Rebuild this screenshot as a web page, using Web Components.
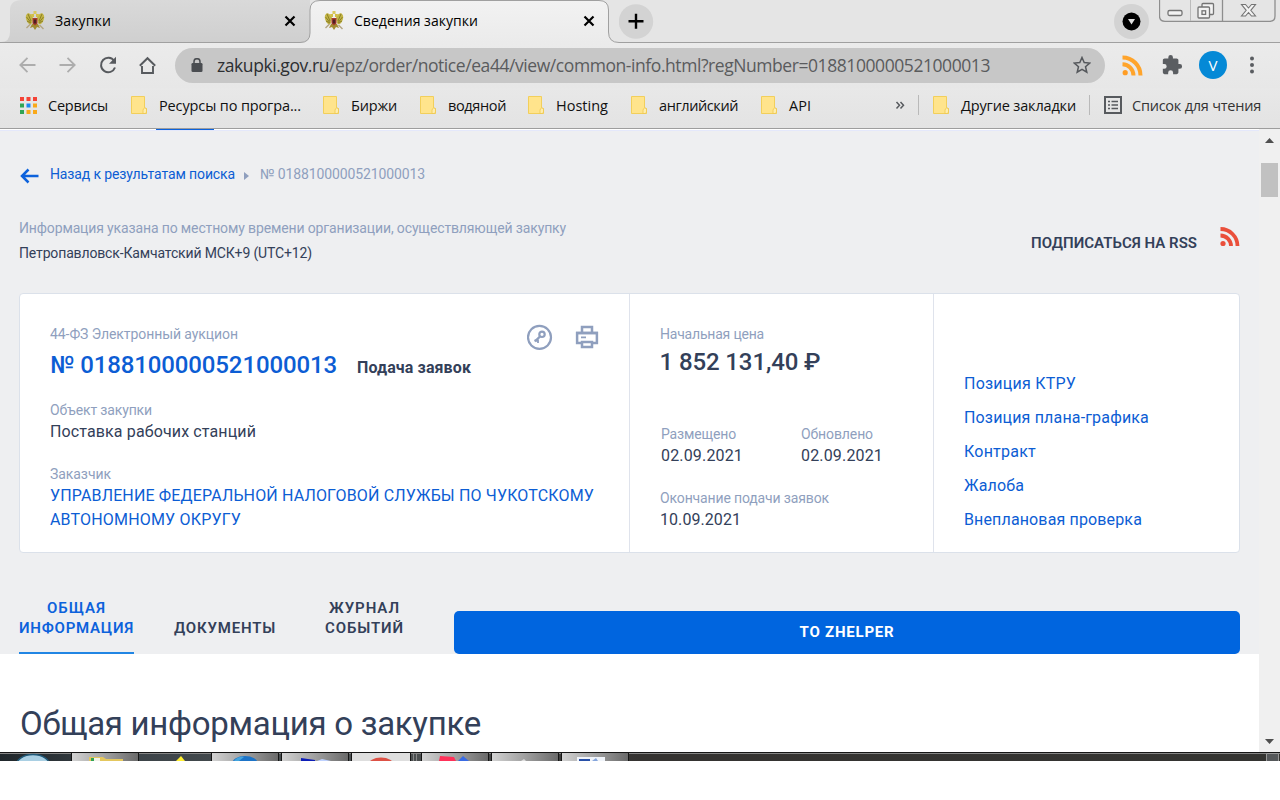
<!DOCTYPE html>
<html lang="ru">
<head>
<meta charset="utf-8">
<title>Сведения закупки</title>
<style>
html,body{margin:0;background:#fff}
body{width:1280px;height:800px;overflow:hidden;font-family:Roboto,"Liberation Sans",sans-serif}
</style>
</head>
<body>
<browser-window></browser-window>
<script>
const define = (name, html, after) => customElements.define(name, class extends HTMLElement {
  connectedCallback() {
    if (this.shadowRoot) return;
    const t = document.createElement('template');
    t.innerHTML = html;
    this.attachShadow({mode: 'open'}).append(t.content.cloneNode(true));
    if (after) after(this);
  }
});

/* One line of text whose tracking is adjusted so that it spans w pixels. */
define('fit-text', `<style>
:host{display:block;white-space:nowrap;flex:none}
span{display:inline-block}
</style><span><slot></slot></span>`, el => {
  const w = +el.getAttribute('w'), s = el.shadowRoot.querySelector('span');
  if (!w) return;
  el.style.width = w + 'px';
  s.style.letterSpacing = '0px';
  const natural = s.getBoundingClientRect().width;
  s.style.letterSpacing = ((w - natural) / el.textContent.length).toFixed(4) + 'px';
});

define('state-emblem', `<style>:host{display:block;width:20px;height:20px;flex:none}svg{display:block}</style>
<svg width="20" height="20" viewBox="0 0 20 20">
<path d="M3 2Q0 4 1 8T4 13Q6 14 7 12L8 7Q7 3 3 2zM17 2Q20 4 19 8T16 13Q14 14 13 12L12 7Q13 3 17 2z" fill="#c3b545"/>
<path d="M3 3l3 7M1.500 6l4 5M17 3l-3 7M18.500 6l-4 5M2 10l4 2M18 10l-4 2" stroke="#857923" stroke-width=".9"/>
<path d="M6 3h3v3H7zM11 3h3l-1 3h-2z" fill="#d2bf45"/><path d="M8.500 0h3v3h-3z" fill="#d9c95e"/>
<path d="M7 13l6 0 2 4-3-1-2 3-2-3-3 1z" fill="#a28c30"/>
<path d="M7.500 7h5v5.500l-2.500 2-2.500-2z" fill="#a83d2c"/><path d="M8.700 8.500h2.600v4H8.700z" fill="#4c1f24"/>
<path d="M1.500 17l4-4M14.500 14l4 4" stroke="#b3a581" stroke-width="1.400"/>
</svg>`);

define('close-mark', `<style>:host{display:block;width:12px;height:12px}svg{display:block}</style>
<svg width="12" height="12" viewBox="0 0 12 12"><path d="M1.500 1.500l9 9M10.500 1.500l-9 9" stroke="#000" stroke-width="2.200"/></svg>`);

define('tab-strip', `<style>
:host{display:grid;height:43px;font:14px "Open Sans","Noto Sans",sans-serif;color:#000}
.bg,.row{grid-area:1/1}
.bg{display:block}
.row{display:flex;height:43px;align-items:flex-start}
state-emblem{margin-top:11px}
fit-text{line-height:20px;margin-top:11px}
close-mark{margin-top:15px}
svg{display:block;flex:none}
</style>
<svg class="bg" width="1280" height="43">
<defs><linearGradient id="a" x2="0" y2="1"><stop stop-color="#d9d9d9"/><stop offset="1" stop-color="#cfcfcf"/></linearGradient>
<linearGradient id="b" x2="0" y2="1"><stop stop-color="#f2f2f2"/><stop offset="1" stop-color="#ebebeb"/></linearGradient></defs>
<rect width="1280" height="43" fill="#e5e5e5"/>
<path d="M0 43H310V0H22Q10 0 10 10V32Q10 42 1 42z" fill="url(#a)"/>
<path d="M300 43Q310 42 310 33V10Q310 .5 320 .5H599Q608.500 .5 608.500 10V32Q608.500 42.500 619 42.500V43z" fill="url(#b)"/>
<path d="M0 42.500H300Q310 42.500 310 33V10Q310 .5 320 .5H599Q608.500 .5 608.500 10V32Q608.500 42.500 619 42.500H1280" fill="none" stroke="#a0a0a0"/>
</svg>
<div class="row">
<state-emblem style="margin-left:25px"></state-emblem>
<fit-text w="56" style="margin-left:10px">Закупки</fit-text>
<close-mark style="margin-left:173px"></close-mark>
<state-emblem style="margin-left:28px"></state-emblem>
<fit-text w="124" style="margin-left:10px">Сведения закупки</fit-text>
<close-mark style="margin-left:105px"></close-mark>
<svg style="margin:4px 0 0 24px" width="35" height="35"><circle cx="17" cy="17.500" r="17.200" fill="#d3d3d3"/><path d="M9.500 17.300h15M17 9.800v15" stroke="#000" stroke-width="2.400"/></svg>
<svg style="margin:4px 0 0 460px" width="35" height="35"><circle cx="17.500" cy="17.500" r="17.500" fill="#d3d3d3"/><circle cx="17.500" cy="17.500" r="9" fill="#000"/><path d="M14 15h7l-3.500 5.500z" fill="#e0e0e0"/></svg>
<svg style="margin-left:10px" width="118" height="23"><g fill="none" stroke="#8e8e8e"><path d="M.5 0V16Q.5 21.300 6 21.300H111Q116 21.300 116 16V0" stroke-width="1.300"/><path d="M31.500 0v21" stroke="#bbb"/><path d="M63.500 0v21" stroke-width="1.300"/></g>
<g fill="#f3f3f3" stroke="#747474" stroke-width="1.300"><rect x="9" y="10.500" width="14" height="5" rx="1.500"/><rect x="43" y="3.500" width="11.500" height="11" rx="1"/><rect x="39" y="7" width="11.500" height="11" rx="1"/><rect x="43" y="10.800" width="3.600" height="3.600"/><path d="M82.500 4.500h4l3 3.500 3-3.500h4l-4.700 5.800 4.700 5.700h-4l-3-3.500-3 3.500h-4l4.700-5.700z" stroke-width="1.100"/></g></svg>
</div>`);

define('address-bar', `<style>
:host{display:flex;height:45px;padding:0 0 1px 19px;background:linear-gradient(#ebebeb,#e7e7e7);align-items:center;box-sizing:border-box}
svg{display:block;flex:none}
.pill{display:flex;align-items:center;width:930px;height:35px;border-radius:18px;background:#c7c7c7;margin-left:18px;flex:none}
fit-text{font:400 17.5px/30px "Open Sans","Noto Sans",sans-serif;margin-left:14px}
fit-text i{font-style:normal;color:#5a5b5d}
fit-text b{font-weight:400;color:#2c2e31}
.av{width:28px;height:28px;border-radius:50%;background:#0589d6;color:#fff;font:15px/28px "Open Sans",sans-serif;text-align:center;margin-left:16px;flex:none}
</style>
<svg width="138" height="20" viewBox="0 0 138 20"><g fill="none" stroke="#adadad" stroke-width="1.800"><path d="M16.500 10H1.500M8.500 2.800L1.300 10l7.200 7.200M40.500 10h15M48.500 2.800l7.200 7.200-7.200 7.200"/></g>
<g fill="none" stroke="#575a5e" stroke-width="2"><path d="M95.200 6A7.200 7.200 0 1 0 96 12.500"/><path d="M123 11v7h11v-7M120.800 10.800l7.700-7.600 7.700 7.600" stroke-width="1.900"/></g><path d="M97 1.800v7h-7z" fill="#575a5e"/></svg>
<div class="pill">
<svg style="margin-left:16px" width="12" height="14" viewBox="0 0 12 14"><rect x=".5" y="5" width="11" height="9" rx="1.300" fill="#4a4d51"/><path d="M3 6V3.700a3 3 0 0 1 6 0V6" fill="none" stroke="#4a4d51" stroke-width="1.500"/></svg>
<fit-text w="773"><b>zakupki.gov.ru</b><i>/epz/order/notice/ea44/view/common-info.html?regNumber=0188100000521000013</i></fit-text>
<svg style="margin-left:83px" width="18" height="18" viewBox="0 0 18 18"><path d="M9 1.500l2.200 5.100 5.500.5-4.200 3.600 1.300 5.500L9 13.300l-4.800 2.900 1.300-5.500-4.200-3.600 5.500-.5z" fill="none" stroke="#55585c" stroke-width="1.500"/></svg>
</div>
<svg style="margin-left:17px" width="21" height="21" viewBox="0 0 21 21"><circle cx="3.200" cy="17.700" r="2.600" fill="#ff9d24"/><path d="M.5 9.200A11.400 11.400 0 0 1 11.500 20.500M.5 2.500A18 18 0 0 1 18.500 20.500" fill="none" stroke="#ffa42b" stroke-width="4"/></svg>
<svg style="margin-left:18px" width="22" height="22" viewBox="0 0 24 24"><path d="M20.500 11H19V7c0-1.100-.9-2-2-2h-4V3.500a2.500 2.500 0 0 0-5 0V5H4c-1.100 0-2 .9-2 2v3.800h1.500a2.700 2.700 0 0 1 0 5.400H2V20c0 1.100.9 2 2 2h3.800v-1.500a2.700 2.700 0 0 1 5.400 0V22H17c1.100 0 2-.9 2-2v-4h1.500a2.500 2.500 0 0 0 0-5z" fill="#5a5d61"/></svg>
<div class="av">V</div>
<svg style="margin-left:22px" width="6" height="18" viewBox="0 0 6 18"><g fill="#5a5d61"><circle cx="3" cy="2.500" r="2"/><circle cx="3" cy="9" r="2"/><circle cx="3" cy="15.500" r="2"/></g></svg>`);

define('book-mark', `<style>:host{display:flex;align-items:center}svg{display:block;flex:none;margin-right:12px}</style>
<svg width="16" height="18" viewBox="0 0 16 18"><path d="M.5.5h13v11.200l2 1v4.800H.5z" fill="#ffe48c" stroke="#f2cf5b"/><path d="M13.500 12q-1.500.5-1.500 2.500v3h2q1.500 0 1.500-1.500v-3.500z" fill="#ffedad" stroke="#edc64c" stroke-width=".8"/></svg><slot></slot>`);

define('bookmarks-bar', `<style>
:host{display:grid;grid-template-columns:111px 192px 97px 108px 103px 130px 134px 23px 15px 156px 15px 160px;height:41px;padding:0 0 6px 20px;box-sizing:border-box;align-items:center;background:linear-gradient(#e8e8e8,#e3e3e3);border-bottom:1px solid #9d9d9d;font:400 14.5px/22px "Open Sans","Noto Sans",sans-serif;color:#111}
fit-text{margin-top:1px}
.s{display:flex;align-items:center;gap:12px}
svg{display:block;flex:none}
i{width:1px;height:20px;background:#b9b9b9}
</style>
<div class="s"><svg width="17" height="17"><g fill="#f44336"><path d="M0 0h4v4H0zM6.500 0h4v4h-4zM13 0h4v4h-4z"/></g><path d="M0 6.500h4v4H0zM0 13h4v4H0z" fill="#31a455"/><path d="M6.500 6.500h4v4h-4z" fill="#1e88f2"/><path d="M13 6.500h4v4h-4zM6.500 13h4v4h-4zM13 13h4v4h-4z" fill="#f9a91a"/></svg><fit-text w="60" style="margin-left:-1px">Сервисы</fit-text></div>
<book-mark><fit-text w="142">Ресурсы по програ...</fit-text></book-mark>
<book-mark><fit-text w="46">Биржи</fit-text></book-mark>
<book-mark><fit-text w="58">водяной</fit-text></book-mark>
<book-mark><fit-text w="52">Hosting</fit-text></book-mark>
<book-mark><fit-text w="79">английский</fit-text></book-mark>
<book-mark><fit-text w="22">API</fit-text></book-mark>
<svg width="10" height="9"><path d="M1.500 1l3 3.300-3 3.300M5.500 1l3 3.300-3 3.300" fill="none" stroke="#575a5e" stroke-width="1.500"/></svg>
<i></i>
<book-mark><fit-text w="115">Другие закладки</fit-text></book-mark>
<i></i>
<div class="s"><svg width="18" height="18"><rect x="1" y="1" width="16" height="16" fill="none" stroke="#575a5e" stroke-width="2"/><path d="M4 5.500h2M4 9h2M4 12.500h2M7.500 5.500h6.500M7.500 9h6.500M7.500 12.500h6.500" stroke="#575a5e" stroke-width="1.500"/></svg><fit-text w="129" style="margin-left:-2px;color:#333">Список для чтения</fit-text></div>`);

define('scroll-bar', `<style>:host{display:flex;flex-direction:column;align-items:center;width:21px;height:623px;background:#f0f0f0;flex:none}svg{display:block}.t{width:17px;height:34px;background:#c1c1c1;margin:20px 0 auto}</style>
<svg style="margin-top:9px" width="9" height="5"><path d="M0 5L4.500 0 9 5z" fill="#4f4f4f"/></svg><div class="t"></div><svg style="margin-bottom:8px" width="9" height="5"><path d="M0 0L4.500 5 9 0z" fill="#4f4f4f"/></svg>`);

define('labeled-value', `<style>:host{display:block;color:#334059;font-size:16px;line-height:24px}.l{display:block;color:#8f9fbe;font-size:14px;line-height:18px;padding-bottom:1px}</style>
<span class="l"><slot name="label"></slot></span><slot></slot>`);

define('purchase-card', `<style>
:host{display:grid;grid-template-columns:609px 303px 305px;column-gap:1px;width:1219px;height:258px;border:1px solid #dbe1ea;border-radius:4px;background:#fff;overflow:hidden;color:#334059}
section{padding:31px 0 0 30px;box-sizing:border-box;box-shadow:1px 0 #dfe3ec}
section:last-child{box-shadow:none;padding-top:73px}
a{color:#0c5dd4}
.top{display:flex;height:68px}
.l{color:#8f9fbe;font-size:14px;line-height:18px}
.num{display:flex;align-items:baseline}
.num a{font-weight:500;font-size:24px;line-height:44px}
.ic{display:flex;gap:22px;margin:-1px 0 0 55px}
svg{display:block;flex:none}
labeled-value{height:64px}
.two{display:flex}
</style>
<section>
<div class="top"><div><fit-text class="l" w="188">44-ФЗ Электронный аукцион</fit-text>
<div class="num"><a><fit-text w="287">№ 0188100000521000013</fit-text></a><fit-text w="114" style="font-size:16px;font-weight:700;margin:0 1px 0 20px">Подача заявок</fit-text></div></div>
<div class="ic"><svg width="26" height="26" viewBox="0 0 26 26"><g fill="none" stroke="#8f9fbe"><circle cx="12.500" cy="13.300" r="11.500" stroke-width="2.200"/><circle cx="15" cy="10.300" r="2.700" stroke-width="2.200"/><path d="M13 12.500L8 17.300" stroke-width="2.400"/><path d="M7.500 16.500H11v2.400" stroke-width="1.800"/></g></svg>
<svg width="24" height="24" viewBox="0 0 24 24" style="margin-top:1px"><g fill="none" stroke="#8f9fbe" stroke-width="2.500"><path d="M7 7.500V2.100h10v5.400M6 17.900H2.100V8.100h19.800v9.800H18"/><path d="M7 16.900h10v5H7z"/><path d="M1 8h22"/><path d="M6 12.300h5" stroke-width="1.800"/></g></svg></div></div>
<labeled-value style="margin-top:8px"><fit-text slot="label" w="102">Объект закупки</fit-text><fit-text w="206">Поставка рабочих станций</fit-text></labeled-value>
<labeled-value><fit-text slot="label" w="61">Заказчик</fit-text><a><fit-text w="544">УПРАВЛЕНИЕ ФЕДЕРАЛЬНОЙ НАЛОГОВОЙ СЛУЖБЫ ПО ЧУКОТСКОМУ</fit-text><fit-text w="191">АВТОНОМНОМУ ОКРУГУ</fit-text></a></labeled-value>
</section>
<section>
<fit-text class="l" w="104">Начальная цена</fit-text>
<fit-text w="161" style="font-size:24px;font-weight:500;line-height:38px;height:75px;margin-left:-.5px">1 852 131,40 ₽</fit-text>
<div class="two" style="margin-top:7px"><labeled-value style="width:141px;margin-left:1px"><fit-text slot="label" w="75">Размещено</fit-text><fit-text w="82">02.09.2021</fit-text></labeled-value><labeled-value style="margin-left:-1px"><fit-text slot="label" w="72">Обновлено</fit-text><fit-text w="82">02.09.2021</fit-text></labeled-value></div>
<labeled-value><fit-text slot="label" w="169">Окончание подачи заявок</fit-text><fit-text w="81">10.09.2021</fit-text></labeled-value>
</section>
<section><a style="display:block;font-size:16px;line-height:34px"><fit-text w="112">Позиция КТРУ</fit-text><fit-text w="185">Позиция плана-графика</fit-text><fit-text w="72">Контракт</fit-text><fit-text w="60">Жалоба</fit-text><fit-text w="178">Внеплановая проверка</fit-text></a></section>`);

define('section-tabs', `<style>
:host{display:flex;align-items:flex-end;height:101px;font:600 15px/20px Roboto,sans-serif;color:#334059}
.t{display:flex;flex-direction:column;align-items:center;padding-bottom:16px}
.on{color:#0c62dc;padding-bottom:14px;border-bottom:2px solid #2186e4}
button{all:unset;display:flex;width:786px;height:43px;margin-left:50px;border-radius:5px;background:#0065df;color:#fff;justify-content:center;align-items:center;font-weight:700;padding-bottom:2px;box-sizing:border-box}
</style>
<div class="t on"><fit-text w="59">ОБЩАЯ</fit-text><fit-text w="115">ИНФОРМАЦИЯ</fit-text></div>
<div class="t" style="margin-left:40px"><fit-text w="102">ДОКУМЕНТЫ</fit-text></div>
<div class="t" style="margin-left:49px"><fit-text w="71">ЖУРНАЛ</fit-text><fit-text w="79">СОБЫТИЙ</fit-text></div>
<button><fit-text w="95">TO ZHELPER</fit-text></button>`);

define('purchase-page', `<style>
:host{display:block;width:1259px;height:623px;background:#eeeff1;overflow:hidden;color:#334059;font:14px/20px Roboto,sans-serif}
.edge{height:1px;background:#fff;border-bottom:1px solid #e4e8fb}
.edge i{display:block;width:58px;height:1px;margin-left:156px;background:#0c62dc}
.crumbs{display:flex;align-items:center;height:20px;margin:33px 0 0 20px;color:#8f9fbe}
.info{display:flex;margin:32px 0 0 19px;line-height:25px;height:77px}
.grey{color:#8f9fbe}
svg{display:block;flex:none}
.head{background:#fff;height:100px;padding:50px 0 0 20px;box-sizing:border-box;font-size:33px;line-height:40px}
</style>
<div class="edge"><i></i></div>
<div class="crumbs"><svg style="margin-top:3px" width="20" height="16" viewBox="0 0 20 16"><path d="M18.500 8H2.500M8.500 1.500L2 8l6.500 6.500" fill="none" stroke="#0c62dc" stroke-width="2.500"/></svg>
<fit-text w="185" style="margin-left:10px;color:#0c5dd4">Назад к результатам поиска</fit-text>
<svg style="margin:3px 0 0 9px" width="5" height="8"><path d="M0 0l5 4-5 4z" fill="#8f9fbe"/></svg>
<fit-text w="165" style="margin-left:11px">№ 0188100000521000013</fit-text></div>
<div class="info"><div><fit-text class="grey" w="547">Информация указана по местному времени организации, осуществляющей закупку</fit-text><fit-text w="293">Петропавловск-Камчатский МСК+9 (UTC+12)</fit-text></div>
<fit-text w="166" style="margin:15px 0 0 465px;font-weight:600;font-size:15px">ПОДПИСАТЬСЯ НА RSS</fit-text>
<svg style="margin:11px 0 0 23px" width="20" height="20" viewBox="0 0 20 20"><g fill="none" stroke="#ea4f3b" stroke-width="3.800"><path d="M.5 8.500A10.500 10.500 0 0 1 11 19M.5 2A17 17 0 0 1 17.500 19"/></g><circle cx="3" cy="16.500" r="2.600" fill="#ea4f3b"/></svg></div>
<purchase-card style="margin-left:19px"></purchase-card>
<section-tabs style="margin-left:19px"></section-tabs>
<div class="head"><fit-text w="461">Общая информация о закупке</fit-text></div>`);

/* Only the upper edge of the desktop taskbar is on screen. */
define('task-bar', `<style>:host{display:block;width:1280px;height:9px}svg{display:block}</style>
<svg width="1280" height="9"><defs><linearGradient id="d"><stop stop-color="#20272b"/><stop offset=".1" stop-color="#3c4348"/><stop offset=".3" stop-color="#4e5354"/><stop offset=".5" stop-color="#353331"/><stop offset="1" stop-color="#343431"/></linearGradient>
<linearGradient id="g"><stop stop-color="#d2d2d2"/><stop offset=".5" stop-color="#a0a0a0"/><stop offset="1" stop-color="#6a6a6a"/></linearGradient></defs>
<rect width="1280" height="9" fill="url(#d)"/><path d="M0 .5h1280" stroke="#151515"/><path d="M0 1.500h1280" stroke="#858585"/>
<g stroke="#151515" fill="none"><path d="M71.500 9V1M138.500 9V1M211.500 9V1M278.500 9V1M281.500 9V1M348.500 9V1M421.500 9V1M488.500 9V1M491.500 9V1M558.500 9V1M561.500 9V1M628.500 9V1"/></g>
<g fill="url(#g)"><rect x="72" y="1" width="66" height="8"/><rect x="212" y="1" width="66" height="8"/><rect x="282" y="1" width="66" height="8"/><rect x="422" y="1" width="66" height="8"/><rect x="492" y="1" width="66" height="8"/><rect x="562" y="1" width="66" height="8"/></g>
<rect x="352" y="1" width="58" height="8" fill="#dedede"/><path d="M351.500 9V1M410.500 9V1" stroke="#151515"/><path d="M413.500 1v8M416.500 1v8" stroke="#888"/>
<ellipse cx="33" cy="14" rx="17" ry="11.500" fill="#a9cfe3" stroke="#205978" stroke-width="1.500"/>
<path d="M89 9V5h14l3 2h17v2z" fill="#e4c75e"/><path d="M91 9V6h3v3z" fill="#32a455"/><path d="M94 9V6h6v3z" fill="#f2f2e8"/>
<path d="M176 9l5-5 4 5z" fill="#ffef31"/><ellipse cx="245" cy="12" rx="13" ry="8" fill="#1d74c8"/><path d="M234 9q4-5 10-4l-5 4z" fill="#43a5de"/>
<path d="M301 6l14 2v1h-14z" fill="#0d1db8"/><path d="M317 9l5-2 9 2z" fill="#bed1ff"/><ellipse cx="381" cy="13" rx="13" ry="7.500" fill="#dd5145"/>
<path d="M440 4l14 1 2 4h-17z" fill="#ff3159"/><path d="M458 9l5-5 6 5z" fill="#396be4"/><path d="M521 9l3-2 2 2z" fill="#ddd"/>
<path d="M577 9V5h28v4z" fill="#f0f4fa"/><path d="M579 9V7h11v2z" fill="#2850a8"/><path d="M592 9l4-3 2 3z" fill="#86a6dc"/>
<path d="M1266.500 9V1.500h12V9" fill="#55585a" stroke="#999"/></svg>`);

define('browser-window', `<style>:host{display:flex;flex-direction:column;width:1280px;height:761px;background:#fff}.view{display:flex;height:623px}</style>
<tab-strip></tab-strip><address-bar></address-bar><bookmarks-bar></bookmarks-bar>
<div class="view"><purchase-page></purchase-page><scroll-bar></scroll-bar></div><task-bar></task-bar>`);
</script>
</body>
</html>
